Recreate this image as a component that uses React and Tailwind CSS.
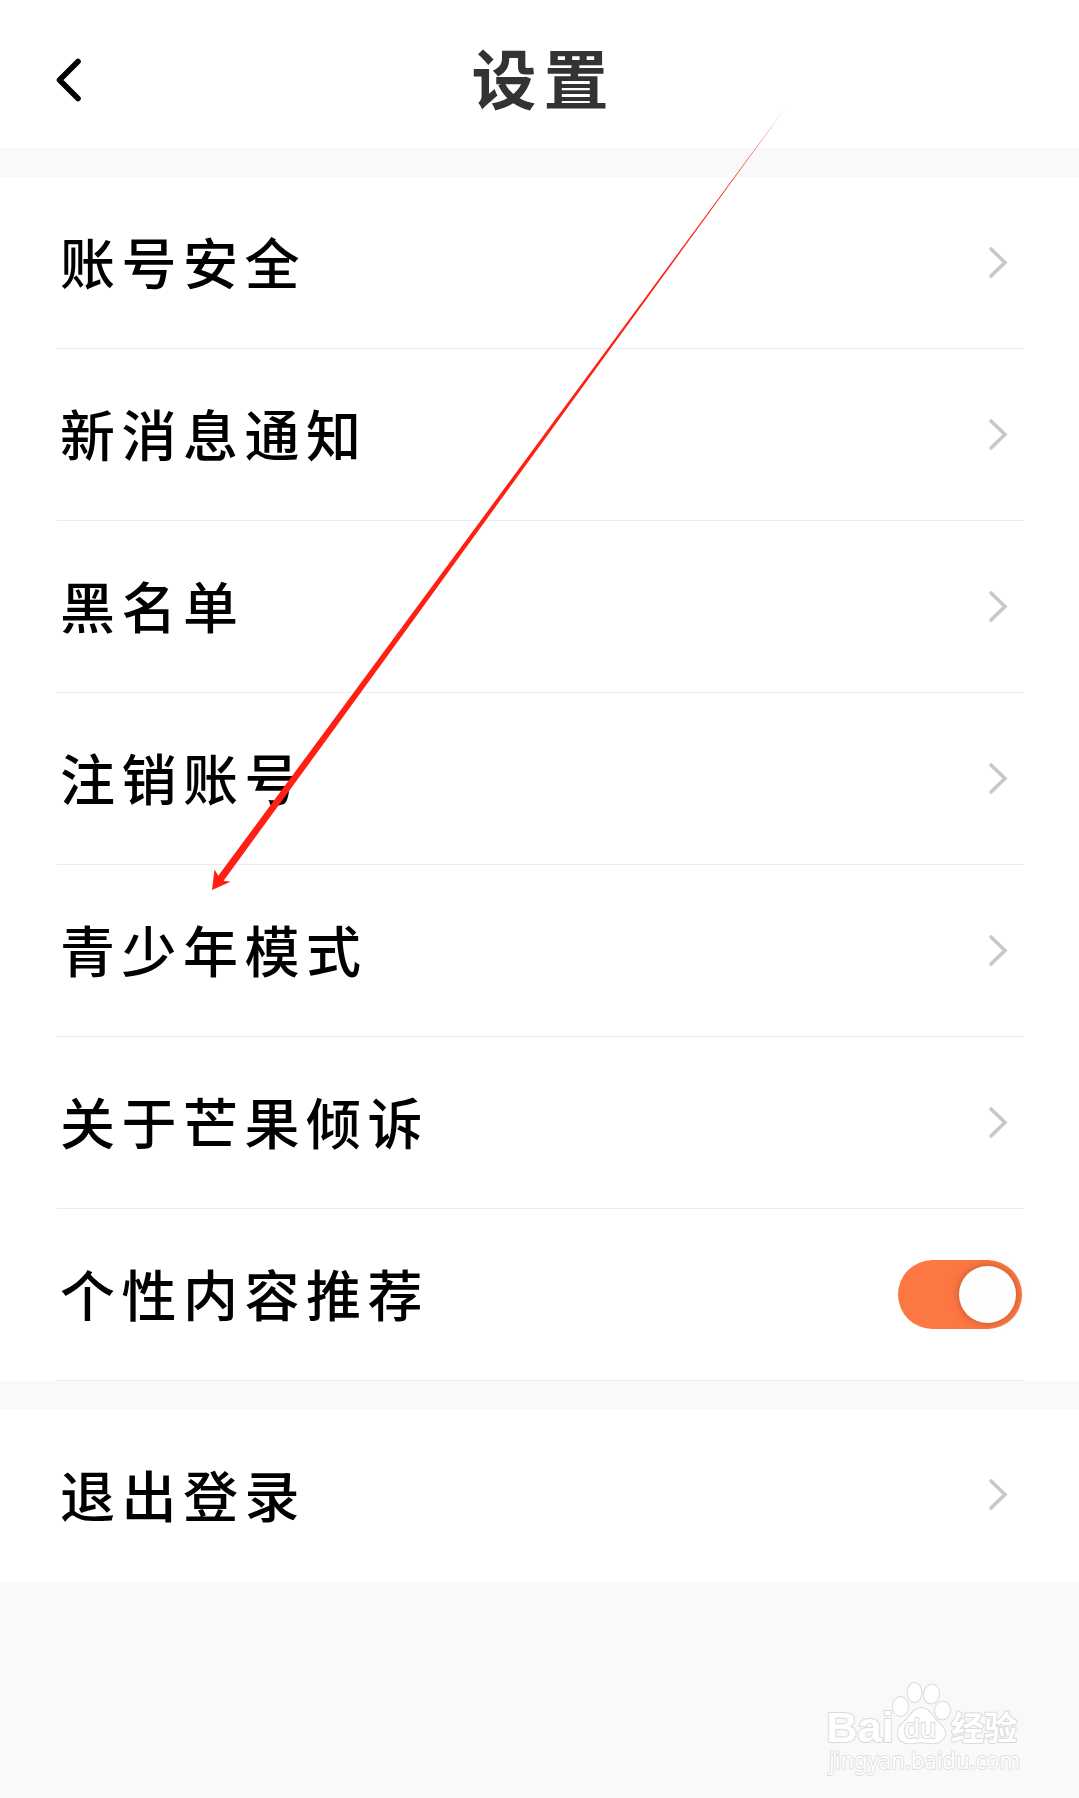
import { useState } from "react";

const ITEMS = [
    { id: "security",  label: "账号安全" },
    { id: "messages",  label: "新消息通知" },
    { id: "blacklist", label: "黑名单" },
    { id: "cancel",    label: "注销账号" },
    { id: "teen",      label: "青少年模式" },
    { id: "about",     label: "关于芒果倾诉" },
];

function Chevron() {
    return (
        <svg className="mr-[16px] h-8 w-5" viewBox="0 0 20 32" fill="none" stroke="#c8c8c8" strokeWidth="3.6" strokeLinecap="round">
            <path d="M3 2 L17 15.5 L3 29" />
        </svg>
    );
}

function Row({ label, children, last }) {
    return (
        <div className={`mr-[55px] ml-[57px] flex items-center justify-between border-b ${last ? "h-[173px] border-transparent" : "h-[172px] border-[#ececec]"}`}>
            <span className="ml-[3px] pb-1 text-[55px] leading-none font-medium tracking-[6.5px] text-black">{label}</span>
            {children}
        </div>
    );
}

function Toggle({ on, onClick }) {
    return (
        <button
            onClick={onClick}
            className={`mr-[2px] flex h-[69px] w-[124px] items-center rounded-full px-[6px] ${on ? "justify-end bg-[#fd7742]" : "justify-start bg-gray-300"}`}
        >
            <span className="size-[57px] rounded-full bg-[#fefefe] shadow-[0_0_8px_rgba(130,60,30,0.55)]" />
        </button>
    );
}

function Arrow() {
    return (
        <svg className="pointer-events-none absolute top-0 left-0" width="1079" height="1000" viewBox="0 0 1079 1000">
            <path d="M786 107 L326 730 L218.3 875.7 L214.5 869.5 L212 890 L230.5 881.7 L223.6 880.7 L333.6 730 Z" fill="#ff2013" />
        </svg>
    );
}

function Watermark() {
    return (
        <svg
            className="absolute right-[52px] bottom-[18px]"
            width="206"
            height="102"
            viewBox="821 1678 206 102"
            fill="#ffffff"
            stroke="#dadada"
            strokeWidth="2"
            strokeLinejoin="round"
            paintOrder="stroke"
        >
            <text x="826" y="1742" fontSize="43" fontWeight="700" textLength="68" lengthAdjust="spacingAndGlyphs" className="font-['Liberation_Sans']">Bai</text>
            <ellipse cx="900.5" cy="1706.5" rx="7.5" ry="9.5" />
            <ellipse cx="914.5" cy="1692.5" rx="7" ry="9.5" />
            <ellipse cx="931.5" cy="1694" rx="7.5" ry="9.5" transform="rotate(10 931.5 1694)" />
            <ellipse cx="942.5" cy="1710.5" rx="7.5" ry="9" />
            <path d="M921 1708 C929 1708 932 1716 937 1721 C942 1726 946 1730 945 1735 C943 1742 935 1744 929 1743 C923 1742 919 1742 914 1743 C906 1744 899 1742 898 1735 C897 1728 902 1724 906 1720 C911 1715 914 1708 921 1708 Z" />
            <text x="904" y="1738" fontSize="27" textLength="32" lengthAdjust="spacingAndGlyphs" className="font-['Liberation_Sans']">du</text>
            <text x="951" y="1740" fontSize="33" fontWeight="700" textLength="66" lengthAdjust="spacingAndGlyphs" className="font-['Noto_Sans_CJK_SC',sans-serif]">经验</text>
            <text x="829" y="1768.5" fontSize="23" strokeWidth="1.6" textLength="191" lengthAdjust="spacingAndGlyphs" className="font-['Noto_Sans']">jingyan.baidu.com</text>
        </svg>
    );
}

export default function App() {
    const [recommend, setRecommend] = useState(true);

    return (
        <div className="relative flex h-[1798px] w-[1079px] flex-col overflow-hidden bg-[#f9f9f9] font-['Noto_Sans_CJK_SC',sans-serif]">
            {/* Header */}
            <header className="grid h-[148px] shrink-0 grid-cols-[1fr_auto_1fr] items-center bg-white">
                <button className="ml-[55px] w-7 pt-[11px]">
                    <svg className="h-11 w-7" viewBox="0 0 28 44" fill="none" stroke="#000" strokeWidth="5.6" strokeLinecap="round" strokeLinejoin="round">
                        <path d="M23 3.5 L4.5 22 L23 40.5" />
                    </svg>
                </button>
                <h1 className="pt-[4px] pl-[8px] text-[65px] leading-none font-bold tracking-[7px] text-[#333]">设置</h1>
            </header>

            {/* Settings */}
            <main className="mt-[29px] shrink-0 bg-white">
                {ITEMS.map((item) => (
                    <Row key={item.id} label={item.label}>
                        <Chevron />
                    </Row>
                ))}
                <Row label="个性内容推荐">
                    <Toggle on={recommend} onClick={() => setRecommend(!recommend)} />
                </Row>
            </main>

            {/* Logout */}
            <section className="mt-7 shrink-0 bg-white">
                <Row label="退出登录" last>
                    <Chevron />
                </Row>
            </section>

            <Watermark />
            <Arrow />
        </div>
    );
}
